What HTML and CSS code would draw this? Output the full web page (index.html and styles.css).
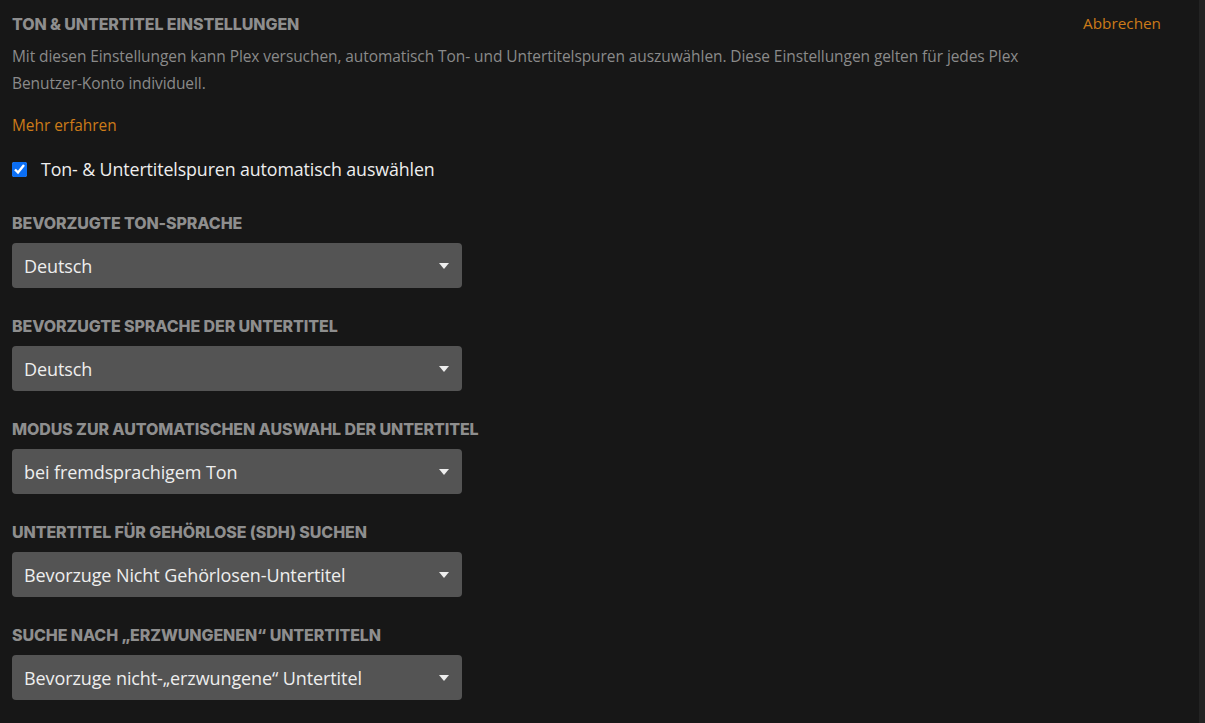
FILE: index.html
```html
<!DOCTYPE html>
<html lang="de">
<head>
<meta charset="utf-8">
<title>Ton &amp; Untertitel Einstellungen</title>
<link rel="stylesheet" href="styles.css">
</head>
<body>
<div class="page">
  <main class="content">
    <div class="head">
      <h2 class="title">TON &amp; UNTERTITEL EINSTELLUNGEN</h2>
      <a class="cancel" href="#">Abbrechen</a>
    </div>
    <p class="desc">Mit diesen Einstellungen kann Plex versuchen, automatisch Ton- und Untertitelspuren auszuwählen. Diese Einstellungen gelten für jedes Plex Benutzer-Konto individuell.</p>
    <a class="more" href="#">Mehr erfahren</a>
    <label class="check">
      <input type="checkbox" checked>
      <span>Ton- &amp; Untertitelspuren automatisch auswählen</span>
    </label>

    <div class="field">
      <div class="label">BEVORZUGTE TON-SPRACHE</div>
      <div class="select"><span>Deutsch</span><i class="caret"></i></div>
    </div>
    <div class="field">
      <div class="label">BEVORZUGTE SPRACHE DER UNTERTITEL</div>
      <div class="select"><span>Deutsch</span><i class="caret"></i></div>
    </div>
    <div class="field">
      <div class="label">MODUS ZUR AUTOMATISCHEN AUSWAHL DER UNTERTITEL</div>
      <div class="select"><span>bei fremdsprachigem Ton</span><i class="caret"></i></div>
    </div>
    <div class="field">
      <div class="label">UNTERTITEL FÜR GEHÖRLOSE (SDH) SUCHEN</div>
      <div class="select"><span>Bevorzuge Nicht Gehörlosen-Untertitel</span><i class="caret"></i></div>
    </div>
    <div class="field">
      <div class="label">SUCHE NACH „ERZWUNGENEN“ UNTERTITELN</div>
      <div class="select"><span>Bevorzuge nicht-„erzwungene“ Untertitel</span><i class="caret"></i></div>
    </div>
  </main>
  <div class="scrollbar"></div>
</div>
</body>
</html>
```

FILE: styles.css
```css
html, body {
  margin: 0;
  padding: 0;
  height: 100%;
  background: #171717;
  overflow: hidden;
}
.page {
  display: flex;
  height: 723px;
}
.content {
  flex: 1;
  padding: 14px 0 0 12px;
  font-family: "Open Sans", "Noto Sans", sans-serif;
}
.scrollbar {
  width: 6px;
  background: #232323;
}
.head {
  display: flex;
  justify-content: space-between;
  align-items: flex-start;
  padding-right: 38px;
}
.title {
  margin: 0;
  font-family: Inter, "Noto Sans", sans-serif;
  font-weight: 800;
  font-size: 16px;
  letter-spacing: -0.1px;
  line-height: 20px;
  color: #8e8e8e;
}
.cancel {
  color: #cc7b19;
  text-decoration: none;
  font-size: 15.3px;
  line-height: 22px;
  margin-top: -2px;
}
.desc {
  margin: 9px 0 0;
  width: 1040px;
  color: #8a8a8a;
  font-size: 15.5px;
  line-height: 27px;
  letter-spacing: -0.08px;
}
.more {
  display: block;
  margin-top: 18px;
  color: #cc7b19;
  text-decoration: none;
  font-size: 15.4px;
  line-height: 22px;
}
.check {
  display: flex;
  align-items: center;
  margin-top: 20px;
  color: #eeeeee;
  font-size: 17.8px;
  line-height: 24px;
  letter-spacing: -0.1px;
}
.check input {
  width: 15px;
  height: 15px;
  margin: 0 14px 0 0;
  accent-color: #0b6ff5;
}
.field {
  margin-top: 32px;
}
.field + .field {
  margin-top: 28px;
}
.label {
  font-family: Inter, "Noto Sans", sans-serif;
  font-weight: 800;
  font-size: 16px;
  letter-spacing: -0.1px;
  line-height: 20px;
  color: #8e8e8e;
}
.select {
  box-sizing: border-box;
  width: 450px;
  height: 45px;
  margin-top: 10px;
  padding: 0 13px 0 12px;
  display: flex;
  align-items: center;
  justify-content: space-between;
  background: #545454;
  border-radius: 4px;
  color: #eeeeee;
  font-size: 18px;
  letter-spacing: -0.1px;
}
.caret {
  width: 0;
  height: 0;
  border-left: 5px solid transparent;
  border-right: 5px solid transparent;
  border-top: 6px solid #eeeeee;
}
```
